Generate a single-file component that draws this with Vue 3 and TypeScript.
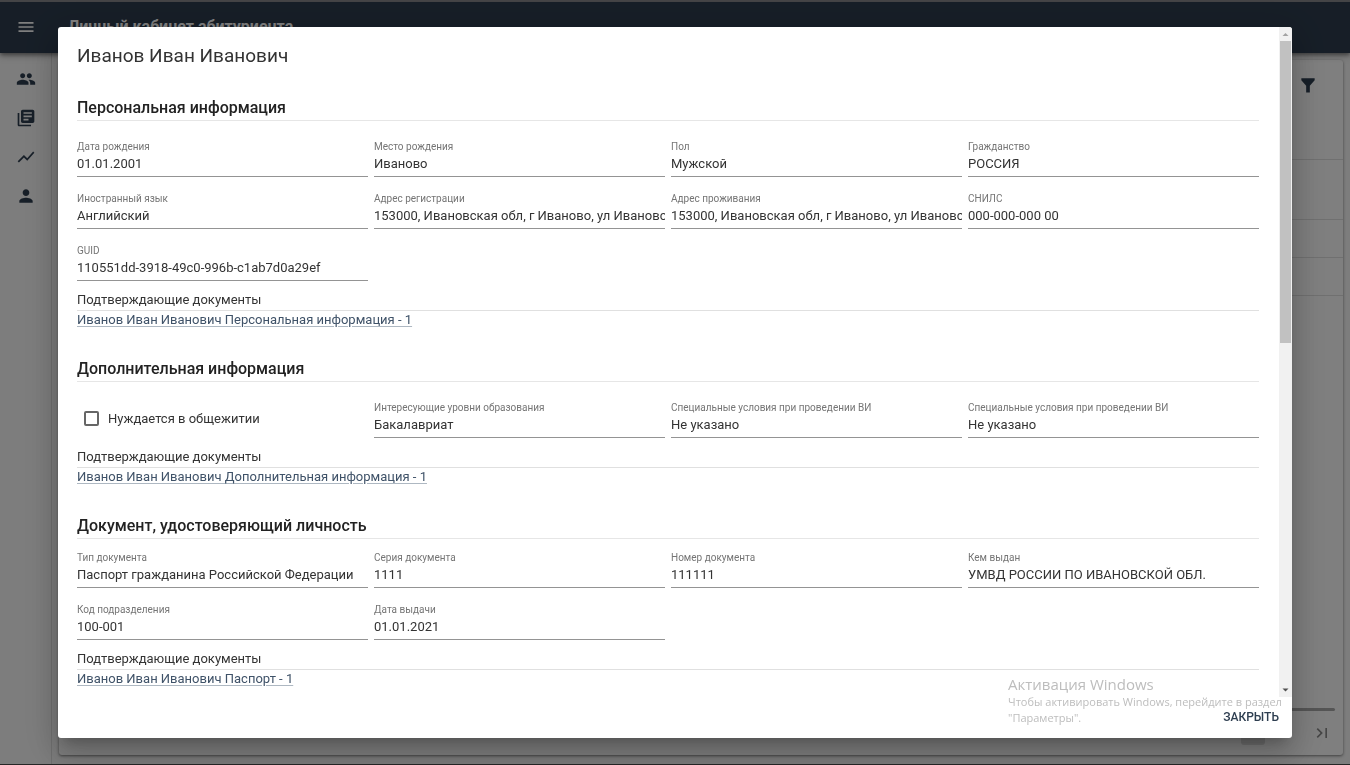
<script setup lang="ts">
import { ref } from 'vue'

interface Field {
  id: string
  label: string
  value: string
}

interface Section {
  title: string
  compact?: boolean
  checkbox?: string
  fields: Field[]
  link: string
}

const address = '153000, Ивановская обл, г Иваново, ул Ивановская, д 1'

const sections: Section[] = [
  {
    title: 'Персональная информация',
    fields: [
      { id: 'birth-date', label: 'Дата рождения', value: '01.01.2001' },
      { id: 'birth-place', label: 'Место рождения', value: 'Иваново' },
      { id: 'gender', label: 'Пол', value: 'Мужской' },
      { id: 'citizenship', label: 'Гражданство', value: 'РОССИЯ' },
      { id: 'language', label: 'Иностранный язык', value: 'Английский' },
      { id: 'reg-address', label: 'Адрес регистрации', value: address },
      { id: 'live-address', label: 'Адрес проживания', value: address },
      { id: 'snils', label: 'СНИЛС', value: '000-000-000 00' },
      { id: 'guid', label: 'GUID', value: '110551dd-3918-49c0-996b-c1ab7d0a29ef' },
    ],
    link: 'Иванов Иван Иванович Персональная информация - 1',
  },
  {
    title: 'Дополнительная информация',
    checkbox: 'Нуждается в общежитии',
    fields: [
      { id: 'levels', label: 'Интересующие уровни образования', value: 'Бакалавриат' },
      { id: 'conditions-1', label: 'Специальные условия при проведении ВИ', value: 'Не указано' },
      { id: 'conditions-2', label: 'Специальные условия при проведении ВИ', value: 'Не указано' },
    ],
    link: 'Иванов Иван Иванович Дополнительная информация - 1',
  },
  {
    title: 'Документ, удостоверяющий личность',
    compact: true,
    fields: [
      { id: 'doc-type', label: 'Тип документа', value: 'Паспорт гражданина Российской Федерации' },
      { id: 'doc-series', label: 'Серия документа', value: '1111' },
      { id: 'doc-number', label: 'Номер документа', value: '111111' },
      { id: 'doc-issuer', label: 'Кем выдан', value: 'УМВД РОССИИ ПО ИВАНОВСКОЙ ОБЛ.' },
      { id: 'doc-code', label: 'Код подразделения', value: '100-001' },
      { id: 'doc-date', label: 'Дата выдачи', value: '01.01.2021' },
    ],
    link: 'Иванов Иван Иванович Паспорт - 1',
  },
]

const navigation = [
  { name: 'Абитуриенты', path: 'M16 11c1.66 0 2.99-1.34 2.99-3S17.66 5 16 5c-1.66 0-3 1.34-3 3s1.34 3 3 3zm-8 0c1.66 0 2.99-1.34 2.99-3S9.66 5 8 5C6.34 5 5 6.34 5 8s1.34 3 3 3zm0 2c-2.33 0-7 1.17-7 3.5V19h14v-2.5c0-2.33-4.67-3.5-7-3.5zm8 0c-.29 0-.62.02-.97.05 1.16.84 1.97 1.97 1.97 3.45V19h6v-2.5c0-2.33-4.67-3.5-7-3.5z' },
  { name: 'Заявления', path: 'M4 6H2v14c0 1.1.9 2 2 2h14v-2H4V6zm16-4H8c-1.1 0-2 .9-2 2v12c0 1.1.9 2 2 2h12c1.1 0 2-.9 2-2V4c0-1.1-.9-2-2-2zm-1 9H9V9h10v2zm-4 4H9v-2h6v2zm4-8H9V5h10v2z' },
  { name: 'Статистика', path: 'M3.5 18.49l6-6.01 4 4L22 6.92l-1.41-1.41-7.09 7.97-4-4L2 16.99z' },
  { name: 'Профиль', path: 'M12 12c2.21 0 4-1.79 4-4s-1.79-4-4-4-4 1.79-4 4 1.79 4 4 4zm0 2c-2.67 0-8 1.34-8 4v2h16v-2c0-2.66-5.33-4-8-4z' },
]

const needsDormitory = ref(false)
</script>

<template>
  <div class="page">
    <header class="app-bar">
      <button class="icon-button menu" type="button" aria-label="Меню">
        <svg viewBox="0 0 24 24"><path d="M3 18h18v-2H3v2zm0-5h18v-2H3v2zm0-7v2h18V6H3z" /></svg>
      </button>
      <h1>Личный кабинет абитуриента</h1>
    </header>
    <div class="body">
      <nav class="sidebar">
        <a v-for="item in navigation" :key="item.name" href="#" :aria-label="item.name">
          <svg viewBox="0 0 24 24"><path :d="item.path" /></svg>
        </a>
      </nav>
      <main class="card">
        <div class="toolbar">
          <button class="icon-button" type="button" aria-label="Фильтр">
            <svg viewBox="0 0 24 24"><path d="M4 4h16v2.200L14.200 13v8h-4.400v-8L4 6.200z" /></svg>
          </button>
        </div>
        <div class="grid-row tall"></div>
        <div class="grid-row"></div>
        <div class="grid-row"></div>
        <div class="grid-space"></div>
        <div class="grid-scroll"></div>
        <div class="pager">
          <span class="current-page"></span>
          <button class="icon-button" type="button" aria-label="Последняя страница">
            <svg viewBox="0 0 24 24"><path d="M5.590 7.410L10.180 12l-4.590 4.590L7 18l6-6-6-6zM16 6h2v12h-2z" /></svg>
          </button>
        </div>
      </main>
    </div>

    <div class="backdrop">
      <div class="dialog" role="dialog" aria-modal="true" aria-labelledby="dialog-title">
        <div class="scroll-area">
          <div class="content">
            <h2 id="dialog-title">Иванов Иван Иванович</h2>
            <section v-for="section in sections" :key="section.title">
              <h3>{{ section.title }}</h3>
              <div class="fields" :class="{ compact: section.compact }">
                <label v-if="section.checkbox" class="check">
                  <input v-model="needsDormitory" type="checkbox" />
                  <span>{{ section.checkbox }}</span>
                </label>
                <div v-for="field in section.fields" :key="field.id" class="field">
                  <label :for="field.id">{{ field.label }}</label>
                  <input :id="field.id" type="text" readonly :value="field.value" />
                </div>
              </div>
              <h4>Подтверждающие документы</h4>
              <a class="doc-link" href="#">{{ section.link }}</a>
            </section>
          </div>
          <div class="scrollbar" aria-hidden="true">
            <svg class="arrow up" viewBox="0 0 13 13"><path d="M3.500 8.500h6l-3-3z" /></svg>
            <div class="track"><div class="thumb"></div></div>
            <svg class="arrow" viewBox="0 0 13 13"><path d="M3.500 5h6l-3 3z" /></svg>
          </div>
        </div>
        <footer>
          <button class="close" type="button">Закрыть</button>
        </footer>
        <aside class="activation">
          <strong>Активация Windows</strong>
          <span>Чтобы активировать Windows, перейдите в раздел</span>
          <span>"Параметры".</span>
        </aside>
      </div>
    </div>
  </div>
</template>

<style>
body {
  margin: 0;
  overflow: hidden;
}
</style>

<style scoped>
* {
  box-sizing: border-box;
}

.page {
  display: flex;
  flex-direction: column;
  height: 100vh;
  background: #fafafa;
  border-bottom: 1px solid #4c4c4c;
  font-family: Roboto, "Liberation Sans", sans-serif;
  color: #333;
}

h1, h2, h3, h4 {
  margin: 0;
}

svg {
  display: block;
  width: 20px;
  height: 20px;
  fill: currentColor;
}

.icon-button {
  padding: 0;
  border: 0;
  background: none;
  color: #2e3e50;
}

.app-bar {
  position: relative;
  z-index: 1;
  display: flex;
  align-items: center;
  gap: 32px;
  flex: none;
  height: 53px;
  padding: 0 16px 1px;
  border-top: 2px solid #88888c;
  background: #2e3d4f;
  box-shadow: 0 2px 4px rgba(0, 0, 0, 0.4), 0 3px 8px rgba(0, 0, 0, 0.2);
}

.app-bar h1 {
  font-size: 16px;
  line-height: 24px;
  font-weight: 700;
  color: #fff;
}

.menu {
  color: #fff;
}

.body {
  display: flex;
  flex: 1;
  min-height: 0;
}

.sidebar {
  display: flex;
  flex-direction: column;
  flex: none;
  width: 52px;
  padding-top: 6px;
  border-right: 1px solid #e0e0e0;
}

.sidebar a {
  display: flex;
  align-items: center;
  justify-content: center;
  height: 39px;
  color: #2e3e50;
}

.card {
  display: flex;
  flex-direction: column;
  flex: 1;
  margin: 7px 7px 9px;
  border-radius: 3px;
  background: #fff;
  box-shadow: 0 1px 3px rgba(0, 0, 0, 0.5);
}

.toolbar {
  display: flex;
  justify-content: flex-end;
  height: 100px;
  padding: 15px 25px;
  border-bottom: 1px solid #e0e0e0;
}

.toolbar .icon-button {
  height: 20px;
}

.grid-row {
  height: 38px;
  border-bottom: 1px solid #e0e0e0;
}

.grid-row.tall {
  height: 60px;
}

.grid-space {
  flex: 1;
}

.grid-scroll {
  height: 3px;
  margin: 0 8px;
  border-radius: 2px;
  background: #aaa;
}

.pager {
  display: flex;
  align-items: center;
  justify-content: flex-end;
  gap: 47px;
  height: 44px;
  padding-right: 11px;
}

.pager .icon-button {
  color: #8c8c8c;
}

.current-page {
  width: 24px;
  height: 24px;
  border-radius: 3px;
  background: #ddd;
}

.backdrop {
  position: fixed;
  inset: 0;
  z-index: 2;
  display: flex;
  padding: 27px 58px;
  background: rgba(0, 0, 0, 0.5);
}

.dialog {
  position: relative;
  display: flex;
  flex-direction: column;
  flex: 1;
  min-width: 0;
  border-radius: 3px;
  background: #fff;
  box-shadow: 0 9px 12px -6px rgba(0, 0, 0, 0.2), 0 19px 30px 2px rgba(0, 0, 0, 0.14), 0 7px 37px 6px rgba(0, 0, 0, 0.12);
}

.scroll-area {
  display: flex;
  flex: 1;
  min-height: 0;
}

.content {
  flex: 1;
  min-width: 0;
  padding: 15px 20px 0 19px;
  overflow: auto;
  scrollbar-width: none;
}

h2 {
  margin-bottom: 26px;
  font-size: 19px;
  line-height: 28px;
  font-weight: 400;
}

section {
  margin-bottom: 28px;
}

h3 {
  border-bottom: 1px solid #e6e6e6;
  font-size: 16px;
  line-height: 24px;
  font-weight: 500;
  color: #222;
}

.fields {
  display: grid;
  grid-template-columns: repeat(4, minmax(0, 1fr));
  gap: 8px 6px;
  padding-top: 12px;
}

.fields.compact {
  padding-top: 5px;
}

.field {
  display: flex;
  flex-direction: column;
  height: 44px;
  padding: 7px 0 2px;
  border-bottom: 1px solid #949494;
}

.field label {
  font-size: 10px;
  line-height: 14px;
  color: #757575;
}

.field input {
  width: 100%;
  height: 20px;
  padding: 0;
  border: 0;
  outline: 0;
  background: none;
  font: 13px/20px Roboto, "Liberation Sans", sans-serif;
  color: #333;
}

.check {
  display: flex;
  align-items: center;
  gap: 9px;
  height: 44px;
  padding: 5px 7px 0;
  font-size: 13px;
  line-height: 20px;
}

.check input {
  appearance: none;
  width: 15px;
  height: 15px;
  margin: 0;
  border: 2px solid #666;
  border-radius: 2px;
}

.check input:checked {
  border-color: #2e3e50;
  background: #2e3e50;
}

h4 {
  margin-top: 9px;
  border-bottom: 1px solid #e0e0e0;
  font-size: 13px;
  line-height: 20px;
  font-weight: 400;
}

.doc-link {
  display: block;
  width: fit-content;
  font-size: 13px;
  line-height: 18px;
  color: #3f5268;
  text-decoration: underline;
  text-decoration-color: #aeb8c2;
  text-underline-offset: 2px;
}

.scrollbar {
  display: flex;
  flex-direction: column;
  flex: none;
  width: 13px;
  border-radius: 0 3px 0 0;
  background: #f1f1f1;
}

.arrow {
  flex: none;
  width: 13px;
  height: 14px;
  color: #505050;
}

.arrow.up {
  color: #a3a3a3;
}

.track {
  flex: 1;
  padding: 0 1px;
}

.thumb {
  height: 47%;
  background: #c1c1c1;
}

footer {
  display: flex;
  align-items: center;
  justify-content: flex-end;
  flex: none;
  height: 41px;
  padding: 0 13px 2px;
}

.close {
  padding: 0;
  border: 0;
  background: none;
  font: 500 12px/14px Roboto, "Liberation Sans", sans-serif;
  text-transform: uppercase;
  color: #2e3e50;
}

.activation {
  position: absolute;
  right: 0;
  bottom: 12px;
  width: 284px;
  font-family: "Open Sans", "Noto Sans", sans-serif;
  color: #bdbdbd;
  white-space: nowrap;
  pointer-events: none;
}

.activation strong {
  display: block;
  font-size: 15px;
  line-height: 20px;
  font-weight: 400;
}

.activation span {
  display: block;
  width: fit-content;
  font-size: 11px;
  line-height: 16px;
}
</style>
